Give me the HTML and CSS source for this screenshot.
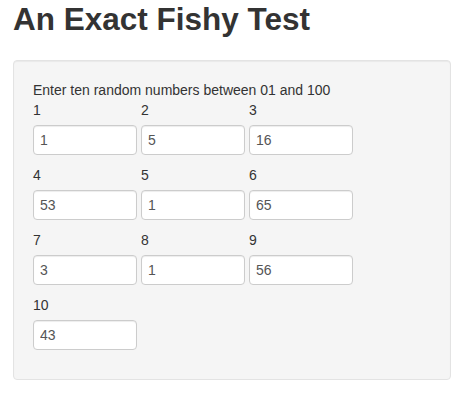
FILE: index.html
```html
<!DOCTYPE html>
<html>
<head>
<meta charset="utf-8">
<link rel="stylesheet" href="styles.css">
</head>
<body>
<div class="page">
  <h1 class="title">An Exact Fishy Test</h1>
  <div class="well">
    <p class="intro">Enter ten random numbers between 01 and 100</p>
    <div class="grid">
      <div class="field"><label>1</label><input type="text" value="1"></div>
      <div class="field"><label>2</label><input type="text" value="5"></div>
      <div class="field"><label>3</label><input type="text" value="16"></div>
      <div class="field"><label>4</label><input type="text" value="53"></div>
      <div class="field"><label>5</label><input type="text" value="1"></div>
      <div class="field"><label>6</label><input type="text" value="65"></div>
      <div class="field"><label>7</label><input type="text" value="3"></div>
      <div class="field"><label>8</label><input type="text" value="1"></div>
      <div class="field"><label>9</label><input type="text" value="56"></div>
      <div class="field"><label>10</label><input type="text" value="43"></div>
    </div>
  </div>
</div>
</body>
</html>
```
FILE: styles.css
```css
html, body {
  margin: 0;
  padding: 0;
  background: #fff;
}
body {
  font-family: "Liberation Sans", Arial, sans-serif;
  font-size: 14px;
  line-height: 20px;
  color: #333;
}
.page {
  padding: 0 10px 0 13px;
}
.title {
  margin: 0;
  padding-top: 2px;
  height: 60px;
  box-sizing: border-box;
  font-size: 31.5px;
  line-height: 35px;
  font-weight: bold;
  color: #333;
}
.well {
  background: #f5f5f5;
  border: 1px solid #e3e3e3;
  border-radius: 4px;
  box-shadow: inset 0 1px 1px rgba(0,0,0,.05);
  padding: 19px;
}
.intro {
  margin: 0;
}
.grid {
  display: grid;
  grid-template-columns: repeat(3, 104px);
  column-gap: 4px;
}
.field {
  display: flex;
  flex-direction: column;
  margin-bottom: 10px;
}
.field label {
  display: block;
  margin-bottom: 5px;
  line-height: 20px;
}
.field input {
  box-sizing: border-box;
  width: 104px;
  height: 30px;
  margin: 0;
  padding: 0 6px;
  border: 1px solid #ccc;
  border-radius: 4px;
  background: #fff;
  box-shadow: inset 0 1px 1px rgba(0,0,0,.075);
  font-family: "Liberation Sans", Arial, sans-serif;
  font-size: 14px;
  color: #555;
}
```
